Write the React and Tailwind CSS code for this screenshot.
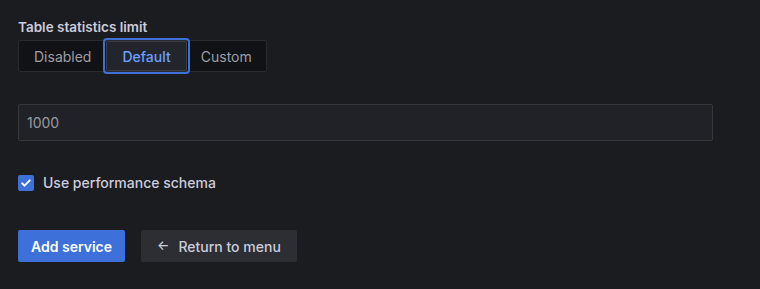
export default function App() {
  return (
    <div className="min-h-[289px] w-full bg-[#1b1c20] px-[18px] pt-[18px] font-['Inter',sans-serif] text-[14px] text-[#ccccdc]">
      <div className="mb-[4px] text-[13.5px] font-semibold leading-[18px]">Table statistics limit</div>
      <div className="flex">
        <div className="flex h-[32px] items-center rounded-[2px] border border-[#2a2b30] bg-[#111216] text-[14px] text-[#9d9ea4]">
          <button className="h-full px-[15px]">Disabled</button>
          <button className="relative h-full rounded-[1px] border border-[#3a3c42] bg-[#22252b] px-[15px] font-medium text-[#6e9fff] outline-2 outline-offset-[1px] outline-[#3d71d9]">
            Default
          </button>
          <button className="h-full px-[14px]">Custom</button>
        </div>
      </div>
      <div className="mt-[32px] w-[695px]">
        <input
          readOnly
          value="1000"
          className="h-[37px] w-full rounded-[2px] border border-[#37383d] bg-[#212227] px-[8px] text-[14px] text-[#9a9aa0] outline-none"
        />
      </div>
      <label className="mt-[31px] flex items-center gap-[9px]">
        <span className="flex h-[16px] w-[16px] items-center justify-center rounded-[2px] bg-[#3d71d9]">
          <svg viewBox="0 0 16 16" className="h-[12px] w-[12px]" fill="none" stroke="white" strokeWidth="2.6" strokeLinecap="round" strokeLinejoin="round">
            <path d="M3 8.5l3 3 7-7" />
          </svg>
        </span>
        <span className="font-medium">Use performance schema</span>
      </label>
      <div className="mt-[37px] flex gap-[16px]">
        <button className="h-[32px] rounded-[2px] bg-[#3d71d9] px-[13px] font-semibold text-white">Add service</button>
        <button className="flex h-[32px] items-center gap-[9px] rounded-[2px] bg-[#2d2e33] px-[16px] font-medium text-[#ccccdc]">
          <span className="text-[13px]">←</span>
          Return to menu
        </button>
      </div>
    </div>
  )
}
